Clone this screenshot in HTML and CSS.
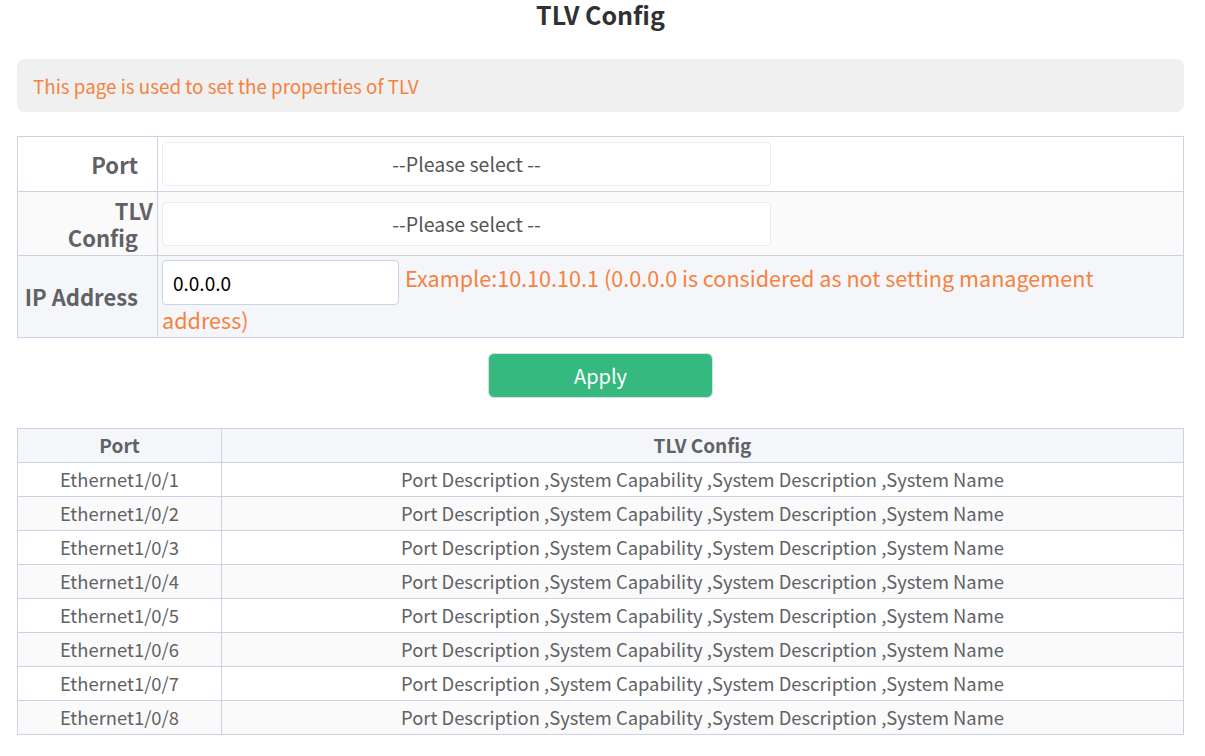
FILE: index.html
```html
<!DOCTYPE html>
<html>
<head>
<meta charset="utf-8">
<link rel="stylesheet" href="styles.css">
</head>
<body>
<div class="page">
  <h1 class="title">TLV Config</h1>
  <div class="info">This page is used to set the properties of TLV</div>
  <table class="form">
    <tr class="r1">
      <td class="label">Port<span class="sp"></span></td>
      <td class="field"><div class="select">--Please select --</div></td>
    </tr>
    <tr class="r2">
      <td class="label">TLV<br>Config<span class="sp"></span></td>
      <td class="field"><div class="select">--Please select --</div></td>
    </tr>
    <tr class="r3">
      <td class="label">IP Address<span class="sp"></span></td>
      <td class="field ip"><span class="input">0.0.0.0</span><span class="hint">Example:10.10.10.1 (0.0.0.0 is considered as not setting management address)</span></td>
    </tr>
  </table>
  <div class="actions"><button class="apply">Apply</button></div>
  <table class="list">
    <thead>
      <tr><th class="c1">Port</th><th>TLV Config</th></tr>
    </thead>
    <tbody>
      <tr><td>Ethernet1/0/1</td><td>Port Description ,System Capability ,System Description ,System Name</td></tr>
      <tr><td>Ethernet1/0/2</td><td>Port Description ,System Capability ,System Description ,System Name</td></tr>
      <tr><td>Ethernet1/0/3</td><td>Port Description ,System Capability ,System Description ,System Name</td></tr>
      <tr><td>Ethernet1/0/4</td><td>Port Description ,System Capability ,System Description ,System Name</td></tr>
      <tr><td>Ethernet1/0/5</td><td>Port Description ,System Capability ,System Description ,System Name</td></tr>
      <tr><td>Ethernet1/0/6</td><td>Port Description ,System Capability ,System Description ,System Name</td></tr>
      <tr><td>Ethernet1/0/7</td><td>Port Description ,System Capability ,System Description ,System Name</td></tr>
      <tr><td>Ethernet1/0/8</td><td>Port Description ,System Capability ,System Description ,System Name</td></tr>
    </tbody>
  </table>
</div>
</body>
</html>
```
FILE: styles.css
```css
html, body {
  margin: 0;
  padding: 0;
  background: #fff;
}
body {
  font-family: "Noto Sans CJK SC", "Noto Sans", sans-serif;
  color: #606266;
  font-size: 18px;
}
.page {
  padding: 0 21px 0 17px;
}
.title {
  margin: 0;
  height: 59px;
  padding-top: 0;
  text-align: center;
  font-size: 25px;
  line-height: 28px;
  font-weight: bold;
  color: #303133;
}
.info {
  background: #f0f0f0;
  border-radius: 8px;
  height: 53px;
  line-height: 53px;
  padding-left: 16px;
  color: #f5823e;
  font-size: 18.8px;
}
.form {
  margin-top: 24px;
  width: 100%;
  border-collapse: collapse;
  border: 1px solid #c9d3e4;
}
.form td {
  border: 1px solid #c9d3e4;
  padding: 4px 4px;
}
.form .r1 { background: #fff; height: 55px; }
.form .r2 { background: #fafafa; height: 64px; }
.form .r3 { background: #f5f6fa; height: 82px; }
.label {
  width: 131px;
  text-align: right;
  font-weight: bold;
  font-size: 22px;
  line-height: 27px;
  color: #606266;
}
.sp {
  display: inline-block;
  width: 15px;
}
.select {
  width: 607px;
  height: 42px;
  line-height: 42px;
  border: 1px solid #e9ebf1;
  border-radius: 4px;
  background: #fff;
  text-align: center;
  color: #555;
  font-size: 19.5px;
}
.field {
  line-height: 30px;
}
.form td.field.ip {
  padding: 4px 30px 1px 4px;
}
.input {
  display: inline-block;
  vertical-align: middle;
  box-sizing: border-box;
  width: 237px;
  height: 45px;
  line-height: 43px;
  border: 1px solid #c9d3e4;
  border-radius: 4px;
  background: #fff;
  padding-left: 10px;
  color: #000;
  font-size: 19px;
}
.hint {
  margin-left: 6px;
  color: #f5823e;
  font-size: 21.6px;
}
.actions {
  display: flex;
  justify-content: center;
  margin-top: 15px;
}
.apply {
  width: 225px;
  height: 45px;
  border: 1px solid #d8dde6;
  border-radius: 6px;
  background: #35b97f;
  color: #fff;
  font-family: inherit;
  font-size: 20px;
}
.list {
  margin-top: 30px;
  width: 100%;
  border-collapse: collapse;
  border: 1px solid #c9d3e4;
}
.list th, .list td {
  border: 1px solid #c9d3e4;
  height: 31px;
  padding: 0 0 2px;
  line-height: 26px;
  text-align: center;
  font-size: 18.4px;
  color: #606266;
}
.list th {
  background: #f5f6fa;
  font-weight: bold;
  font-size: 19px;
}
.list .c1 { width: 203px; }
.list tbody tr:nth-child(even) { background: #fafafa; }
```
